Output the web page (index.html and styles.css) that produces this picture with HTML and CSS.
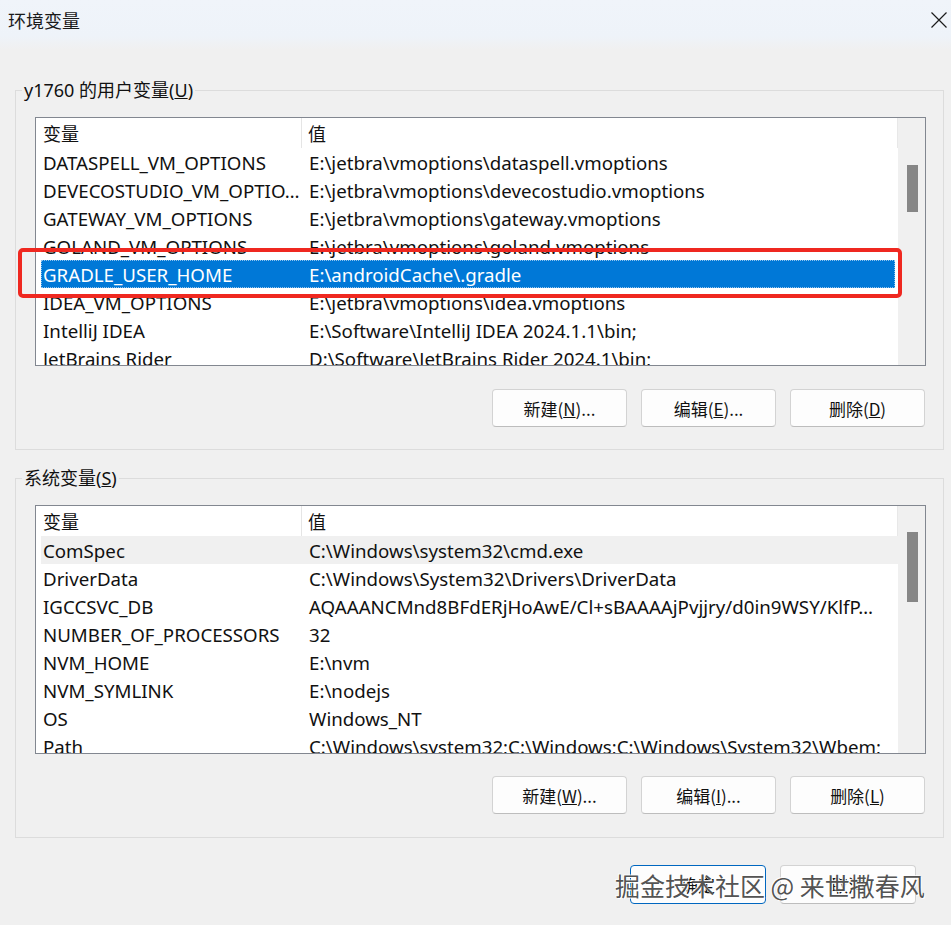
FILE: index.html
```html
<!DOCTYPE html>
<html lang="zh-CN">
<head>
  <meta charset="UTF-8" />
  <meta name="viewport" content="width=device-width, initial-scale=1.0" />
  <title>环境变量</title>
  <link rel="stylesheet" href="styles.css">
</head>
<body>

  <div class="window">
    <div class="titlebar">
      <span class="title">环境变量</span>
      <svg class="close" width="16" height="16" viewBox="0 0 16 16">
        <path d="M0.5 0.5L15.5 15.5M15.5 0.5L0.5 15.5" stroke="#1b1b1b" stroke-width="1.2" fill="none" />
      </svg>
    </div>

    <!-- User variables -->
    <fieldset class="group">
      <legend>y1760 的用户变量(<u>U</u>)</legend>
      <div class="list">
        <div class="list-main">
          <div class="list-head">
            <span class="head-name">变量</span>
            <span class="head-value">值</span>
          </div>
          <div class="list-rows">
            <div class="row"><span class="cell-name">DATASPELL_VM_OPTIONS</span><span class="cell-value">E:\jetbra\vmoptions\dataspell.vmoptions</span></div>
            <div class="row"><span class="cell-name">DEVECOSTUDIO_VM_OPTIO…</span><span class="cell-value">E:\jetbra\vmoptions\devecostudio.vmoptions</span></div>
            <div class="row"><span class="cell-name">GATEWAY_VM_OPTIONS</span><span class="cell-value">E:\jetbra\vmoptions\gateway.vmoptions</span></div>
            <div class="row"><span class="cell-name">GOLAND_VM_OPTIONS</span><span class="cell-value">E:\jetbra\vmoptions\goland.vmoptions</span></div>
            <div class="row selected"><span class="cell-name">GRADLE_USER_HOME</span><span class="cell-value">E:\androidCache\.gradle</span></div>
            <div class="row"><span class="cell-name">IDEA_VM_OPTIONS</span><span class="cell-value">E:\jetbra\vmoptions\idea.vmoptions</span></div>
            <div class="row"><span class="cell-name">IntelliJ IDEA</span><span class="cell-value">E:\Software\IntelliJ IDEA 2024.1.1\bin;</span></div>
            <div class="row"><span class="cell-name">JetBrains Rider</span><span class="cell-value">D:\Software\JetBrains Rider 2024.1\bin;</span></div>
          </div>
        </div>
        <div class="scrollbar">
          <div class="thumb" style="margin-top: 47px; height: 47px;"></div>
        </div>
      </div>
      <div class="actions">
        <button class="btn">新建(<u>N</u>)...</button>
        <button class="btn">编辑(<u>E</u>)...</button>
        <button class="btn">删除(<u>D</u>)</button>
      </div>
    </fieldset>

    <!-- System variables -->
    <fieldset class="group group-system">
      <legend>系统变量(<u>S</u>)</legend>
      <div class="list">
        <div class="list-main">
          <div class="list-head">
            <span class="head-name">变量</span>
            <span class="head-value">值</span>
          </div>
          <div class="list-rows">
            <div class="row hover"><span class="cell-name">ComSpec</span><span class="cell-value">C:\Windows\system32\cmd.exe</span></div>
            <div class="row"><span class="cell-name">DriverData</span><span class="cell-value">C:\Windows\System32\Drivers\DriverData</span></div>
            <div class="row"><span class="cell-name">IGCCSVC_DB</span><span class="cell-value">AQAAANCMnd8BFdERjHoAwE/Cl+sBAAAAjPvjjry/d0in9WSY/KlfP…</span></div>
            <div class="row"><span class="cell-name">NUMBER_OF_PROCESSORS</span><span class="cell-value">32</span></div>
            <div class="row"><span class="cell-name">NVM_HOME</span><span class="cell-value">E:\nvm</span></div>
            <div class="row"><span class="cell-name">NVM_SYMLINK</span><span class="cell-value">E:\nodejs</span></div>
            <div class="row"><span class="cell-name">OS</span><span class="cell-value">Windows_NT</span></div>
            <div class="row"><span class="cell-name">Path</span><span class="cell-value">C:\Windows\system32;C:\Windows;C:\Windows\System32\Wbem;</span></div>
          </div>
        </div>
        <div class="scrollbar">
          <div class="thumb" style="margin-top: 26px; height: 70px;"></div>
        </div>
      </div>
      <div class="actions">
        <button class="btn">新建(<u>W</u>)...</button>
        <button class="btn">编辑(<u>I</u>)...</button>
        <button class="btn">删除(<u>L</u>)</button>
      </div>
    </fieldset>

    <div class="dialog-actions">
      <button class="btn btn-default">确定</button>
      <button class="btn">取消</button>
    </div>

    <div class="mark-box"></div>
    <div class="watermark">掘金技术社区 @ 来世撒春风</div>
  </div>

</body>
</html>
```

FILE: styles.css
```css
* {
  box-sizing: border-box;
}

body {
  margin: 0;
  font-family: 'Noto Sans', 'Noto Sans CJK SC', sans-serif;
  font-size: 18px;
  color: #111;
  background: #f0f0f0;
}

.window {
  position: relative;
  width: 951px;
  height: 925px;
  overflow: hidden;
  background: linear-gradient(to bottom, #f0f4fa 0, #eef3f9 36px, #f0f0f0 50px) no-repeat #f0f0f0;
}

.titlebar {
  height: 40px;
  display: flex;
  align-items: center;
  justify-content: space-between;
  padding: 0 4px 0 8px;
}

.title {
  font-family: 'Noto Sans CJK SC', sans-serif;
  font-size: 18px;
  color: #1a1a1a;
}

/* Group boxes */
.group {
  margin: 38px 7px 0 15px;
  padding: 15px 17px 22px 19px;
  border: 1px solid #dcdcdc;
  min-inline-size: 0;
}

.group-system {
  margin-top: 16px;
  padding-bottom: 23px;
}

.group legend {
  margin-left: -13px;
  padding: 0 2px;
  line-height: 24px;
  font-size: 18px;
  color: #111;
}

/* List view */
.list {
  display: flex;
  height: 249px;
  border: 1px solid #828790;
  background: #fff;
  overflow: hidden;
}

.list-main {
  flex: 1;
  min-width: 0;
}

.list-head {
  display: flex;
  height: 30px;
  align-items: center;
  border-right: 1px solid #e8e8e8;
}

.head-name {
  width: 266px;
  padding-left: 7px;
  align-self: stretch;
  display: flex;
  align-items: center;
  border-right: 1px solid #e5e5e5;
  font-family: 'Noto Sans CJK SC', sans-serif;
}

.head-value {
  padding-left: 6px;
  font-family: 'Noto Sans CJK SC', sans-serif;
}

.list-rows {
  padding-left: 5px;
}

.row {
  display: flex;
  height: 28px;
  align-items: center;
  white-space: nowrap;
  font-size: 18.7px;
  color: #111;
}

.cell-name {
  width: 261px;
  padding-left: 2px;
  overflow: hidden;
}

.cell-value {
  flex: 1;
  padding-left: 7px;
  overflow: hidden;
}

.row.selected {
  width: 854px;
  background: #0078d7;
  color: #fff;
  outline: 1px dotted #8fc3ee;
  outline-offset: -1px;
}

.row.hover {
  background: #f0f0f0;
}

.scrollbar {
  width: 27px;
  background: #f0f0f0;
  display: flex;
  justify-content: center;
  align-items: flex-start;
  padding-left: 1px;
}

.thumb {
  width: 11px;
  background: #868686;
}

/* Buttons */
.actions {
  display: flex;
  justify-content: flex-end;
  gap: 14px;
  margin-top: 23px;
  padding-right: 1px;
}

.group-system .actions {
  margin-top: 22px;
}

.btn {
  width: 135px;
  height: 38px;
  font: inherit;
  font-family: 'Noto Sans CJK SC', sans-serif;
  font-size: 17px;
  color: #111;
  background: #fdfdfd;
  border: 1px solid #d3d3d3;
  border-bottom-color: #bdbdbd;
  border-radius: 4px;
  padding: 0;
}

.dialog-actions {
  display: flex;
  justify-content: flex-end;
  gap: 14px;
  margin-top: 27px;
  padding-right: 35px;
}

.dialog-actions .btn {
  width: 136px;
  height: 39px;
}

.btn-default {
  border: 1px solid #0067c0;
}

/* Red annotation frame around the selected row */
.mark-box {
  position: absolute;
  left: 18px;
  top: 248px;
  width: 884px;
  height: 50px;
  border: 4px solid #ef2820;
  border-radius: 5px;
}

.watermark {
  position: absolute;
  left: 615px;
  top: 869px;
  font-family: 'Noto Sans CJK SC', sans-serif;
  font-size: 25px;
  line-height: 32px;
  color: rgba(60, 60, 60, 0.9);
  text-shadow: 1px 1px 0 #fff, -1px -1px 0 rgba(255, 255, 255, 0.8);
  white-space: nowrap;
}
```
